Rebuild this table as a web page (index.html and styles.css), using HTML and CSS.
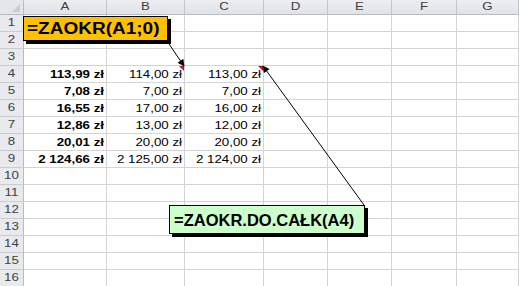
FILE: index.html
```html
<!DOCTYPE html>
<html lang="pl">
<head>
<meta charset="utf-8">
<title>ZAOKR</title>
<link rel="stylesheet" href="styles.css">
</head>
<body>
<div class="sheet">
  <div class="grid">
    <div class="corner"><span class="corner-tri"></span></div>
    <div class="ch"><span class="v">A</span></div>
    <div class="ch"><span class="v">B</span></div>
    <div class="ch"><span class="v">C</span></div>
    <div class="ch"><span class="v">D</span></div>
    <div class="ch"><span class="v">E</span></div>
    <div class="ch"><span class="v">F</span></div>
    <div class="ch last"><span class="v">G</span></div>

    <div class="rh"><span class="v">1</span></div><div class="c"></div><div class="c"></div><div class="c"></div><div class="c"></div><div class="c"></div><div class="c"></div><div class="c"></div>
    <div class="rh"><span class="v">2</span></div><div class="c"></div><div class="c"></div><div class="c"></div><div class="c"></div><div class="c"></div><div class="c"></div><div class="c"></div>
    <div class="rh"><span class="v">3</span></div><div class="c"></div><div class="c"></div><div class="c"></div><div class="c"></div><div class="c"></div><div class="c"></div><div class="c"></div>
    <div class="rh"><span class="v">4</span></div><div class="c b"><span class="v">113,99 zł</span></div><div class="c"><span class="v">114,00 zł</span><i class="note"></i></div><div class="c"><span class="v">113,00 zł</span><i class="note"></i></div><div class="c"></div><div class="c"></div><div class="c"></div><div class="c"></div>
    <div class="rh"><span class="v">5</span></div><div class="c b"><span class="v">7,08 zł</span></div><div class="c"><span class="v">7,00 zł</span></div><div class="c"><span class="v">7,00 zł</span></div><div class="c"></div><div class="c"></div><div class="c"></div><div class="c"></div>
    <div class="rh"><span class="v">6</span></div><div class="c b"><span class="v">16,55 zł</span></div><div class="c"><span class="v">17,00 zł</span></div><div class="c"><span class="v">16,00 zł</span></div><div class="c"></div><div class="c"></div><div class="c"></div><div class="c"></div>
    <div class="rh"><span class="v">7</span></div><div class="c b"><span class="v">12,86 zł</span></div><div class="c"><span class="v">13,00 zł</span></div><div class="c"><span class="v">12,00 zł</span></div><div class="c"></div><div class="c"></div><div class="c"></div><div class="c"></div>
    <div class="rh"><span class="v">8</span></div><div class="c b"><span class="v">20,01 zł</span></div><div class="c"><span class="v">20,00 zł</span></div><div class="c"><span class="v">20,00 zł</span></div><div class="c"></div><div class="c"></div><div class="c"></div><div class="c"></div>
    <div class="rh"><span class="v">9</span></div><div class="c b"><span class="v">2 124,66 zł</span></div><div class="c"><span class="v">2 125,00 zł</span></div><div class="c"><span class="v">2 124,00 zł</span></div><div class="c"></div><div class="c"></div><div class="c"></div><div class="c"></div>
    <div class="rh"><span class="v">10</span></div><div class="c"></div><div class="c"></div><div class="c"></div><div class="c"></div><div class="c"></div><div class="c"></div><div class="c"></div>
    <div class="rh"><span class="v">11</span></div><div class="c"></div><div class="c"></div><div class="c"></div><div class="c"></div><div class="c"></div><div class="c"></div><div class="c"></div>
    <div class="rh"><span class="v">12</span></div><div class="c"></div><div class="c"></div><div class="c"></div><div class="c"></div><div class="c"></div><div class="c"></div><div class="c"></div>
    <div class="rh"><span class="v">13</span></div><div class="c"></div><div class="c"></div><div class="c"></div><div class="c"></div><div class="c"></div><div class="c"></div><div class="c"></div>
    <div class="rh"><span class="v">14</span></div><div class="c"></div><div class="c"></div><div class="c"></div><div class="c"></div><div class="c"></div><div class="c"></div><div class="c"></div>
    <div class="rh"><span class="v">15</span></div><div class="c"></div><div class="c"></div><div class="c"></div><div class="c"></div><div class="c"></div><div class="c"></div><div class="c"></div>
    <div class="rh"><span class="v">16</span></div><div class="c"></div><div class="c"></div><div class="c"></div><div class="c"></div><div class="c"></div><div class="c"></div><div class="c"></div>
  </div>

  <svg class="arrows" width="519" height="286" viewBox="0 0 519 286">
    <defs>
      <marker id="head" viewBox="0 0 10 10" refX="9" refY="5" markerWidth="8" markerHeight="7" markerUnits="userSpaceOnUse" orient="auto">
        <path d="M0 0 L10 5 L0 10 Z" fill="#000"/>
      </marker>
    </defs>
    <line x1="167" y1="41" x2="184" y2="66" stroke="#000" stroke-width="1" marker-end="url(#head)"/>
    <line x1="364" y1="205" x2="263" y2="66" stroke="#000" stroke-width="1" marker-end="url(#head)"/>
  </svg>

  <div class="callout yellow"><span class="ct">=ZAOKR(A1;0)</span></div>
  <div class="callout green"><span class="ct2">=ZAOKR.DO.CAŁK(A4)</span></div>
</div>
</body>
</html>
```
FILE: styles.css
```css
html, body {
  margin: 0;
  padding: 0;
  background: #fff;
  overflow: hidden;
}

.sheet {
  position: relative;
  width: 519px;
  height: 286px;
  overflow: hidden;
  font-family: "Liberation Sans", Arial, sans-serif;
  font-size: 13.3px;
  color: #000;
}

.grid {
  display: grid;
  grid-template-columns: 24px 83px 78px 79px 64px 64px 65px 1fr;
  grid-template-rows: 15px repeat(16, 17px);
}

.grid > div {
  box-sizing: border-box;
  border-right: 1px solid #d4d4d4;
  border-bottom: 1px solid #d4d4d4;
  overflow: hidden;
  white-space: nowrap;
}

.v {
  display: inline-block;
  transform: scaleY(0.85);
  line-height: 16px;
}

.corner {
  position: relative;
  background: #e4e6ea;
  border-right-color: #b8bcc2 !important;
  border-bottom-color: #b8bcc2 !important;
}

.corner-tri {
  position: absolute;
  right: 3px;
  bottom: 2px;
  width: 0;
  height: 0;
  border-left: 8px solid transparent;
  border-bottom: 8px solid #c9ccd1;
}

.ch {
  background: linear-gradient(#eceef1, #e0e3e7);
  border-right-color: #c2c6cc !important;
  border-bottom-color: #b8bcc2 !important;
  text-align: center;
  color: #3f3f3f;
  line-height: 14px;
}

.ch .v {
  line-height: 14px;
}

.rh {
  background: #e8eaed;
  border-right-color: #b8bcc2 !important;
  border-bottom-color: #c9ccd1 !important;
  text-align: center;
  color: #3f3f3f;
}

.c {
  position: relative;
  text-align: right;
  padding-right: 2px;
  background: #fff;
}

.c .v {
  line-height: 17px;
}

.b {
  font-weight: bold;
}

.note {
  position: absolute;
  top: 0;
  right: 0;
  width: 0;
  height: 0;
  border-left: 5px solid transparent;
  border-top: 5px solid #c0141e;
}

.arrows {
  position: absolute;
  left: 0;
  top: 0;
  pointer-events: none;
}

.callout {
  position: absolute;
  box-sizing: border-box;
  border: 1px solid #000;
  box-shadow: 3px 3px 0 #000;
  font-weight: bold;
  white-space: nowrap;
  display: flex;
  align-items: center;
}

.yellow {
  left: 23px;
  top: 16px;
  width: 145px;
  height: 25px;
  background: #ffc000;
  padding-left: 3px;
  font-size: 19px;
}

.ct {
  display: inline-block;
  transform: scaleY(0.85);
  line-height: 22px;
}

.green {
  left: 169px;
  top: 205px;
  width: 196px;
  height: 29px;
  background: #ccffcc;
  padding-left: 4px;
  font-size: 16.5px;
}

.ct2 {
  display: inline-block;
  line-height: 22px;
}
```
